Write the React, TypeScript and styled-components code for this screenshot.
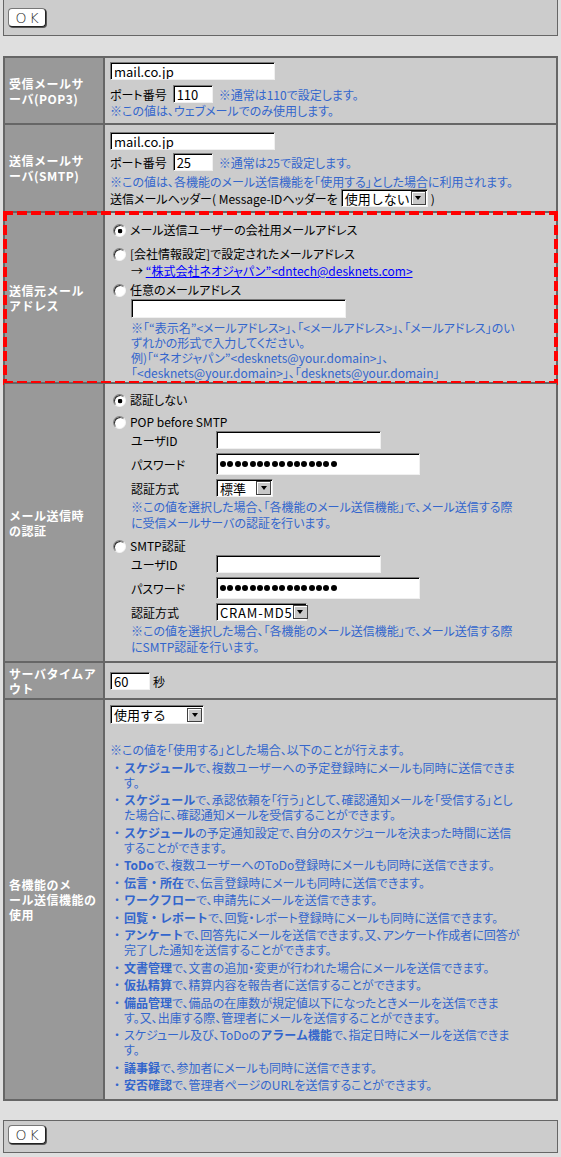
import React from 'react';
import styled, { createGlobalStyle, css } from 'styled-components';

const GlobalStyle = createGlobalStyle`
  html, body {
    margin: 0;
    padding: 0;
    background: #dfdfdf;
  }
  body {
    font-family: "Noto Sans CJK JP", "Noto Sans", sans-serif;
    font-size: 12px;
    line-height: 15px;
    color: #000;
    font-feature-settings: "palt";
  }
`;

const Page = styled.div`
  width: 555px;
  margin-left: 3px;
`;

const ButtonBar = styled.div<{ $top?: boolean }>`
  box-sizing: border-box;
  height: ${(p) => (p.$top ? 36 : 33)}px;
  margin-top: ${(p) => (p.$top ? 0 : 19)}px;
  padding: ${(p) => (p.$top ? 8 : 4)}px 3px 0;
  background: #cccccc;
  border: 1px solid #666;
  ${(p) =>
    p.$top &&
    css`
      border-top: none;
    `}
`;

const OkButton = styled.button`
  box-sizing: border-box;
  display: block;
  width: 38px;
  height: 19px;
  margin: 0 0 0 1px;
  padding: 0 0 0 3px;
  background: #fff;
  border: 1px solid #777;
  border-right-color: #222;
  border-bottom-color: #222;
  border-radius: 4px;
  box-shadow: 1px 1px 0 #555;
  font-family: "DejaVu Sans", sans-serif;
  font-size: 14px;
  font-weight: 300;
  letter-spacing: 3px;
  line-height: 16px;
  color: #2a2a2a;
  text-align: center;
`;

const FormTable = styled.div`
  margin-top: 20px;
  border: 1px solid #666;
`;

const Row = styled.div<{ $marked?: boolean }>`
  display: grid;
  grid-template-columns: 100px 1fr;
  position: relative;

  ${(p) =>
    p.$marked &&
    css`
      &::after {
        content: '';
        position: absolute;
        top: -1px;
        bottom: -2px;
        left: -1px;
        right: -1px;
        pointer-events: none;
        background:
          repeating-linear-gradient(90deg, #ff0000 0 10px, transparent 10px 14px) top / 100% 4px no-repeat,
          repeating-linear-gradient(90deg, #ff0000 0 10px, transparent 10px 14px) bottom / 100% 4px no-repeat,
          repeating-linear-gradient(180deg, #ff0000 0 10px, transparent 10px 14px) left / 4px 100% no-repeat,
          repeating-linear-gradient(180deg, #ff0000 0 10px, transparent 10px 14px) right / 4px 100% no-repeat;
      }
    `}
`;

const Label = styled.div`
  display: flex;
  align-items: center;
  padding-left: 4px;
  background: #999999;
  border: 1px solid #666;
  color: #fff;
  font-weight: bold;
  letter-spacing: 0.5px;
  font-feature-settings: normal;
  white-space: nowrap;
`;

const Cell = styled.div<{ $pad?: string }>`
  min-width: 0;
  padding: ${(p) => p.$pad ?? '5px'};
  background: #cccccc;
  border: 1px solid #666;
`;

const Line = styled.div<{ $mt?: number; $gap?: number }>`
  display: flex;
  align-items: center;
  gap: ${(p) => p.$gap ?? 6}px;
  margin-top: ${(p) => p.$mt ?? 0}px;
  white-space: nowrap;
`;

const Note = styled.div<{ $mt?: number; $lh?: number }>`
  margin-top: ${(p) => p.$mt ?? 0}px;
  line-height: ${(p) => p.$lh ?? 15}px;
  color: #3366cc;
  white-space: nowrap;
`;

const Hint = styled.span`
  color: #3366cc;
`;

const frame = css`
  box-sizing: border-box;
  margin: 0;
  background: #fff;
  border: 1px solid;
  border-color: #7a7a7a #f0f0f0 #f0f0f0 #7a7a7a;
  box-shadow: inset 1px 1px 0 #000;
`;

const Field = styled.input<{ $w: number; $h?: number }>`
  ${frame};
  width: ${(p) => p.$w}px;
  height: ${(p) => p.$h ?? 18}px;
  padding: 1px 2px 0 3px;
  font-family: "Noto Sans CJK JP", sans-serif;
  font-size: 13px;
  color: #000;
  outline: none;
  flex: none;
`;

const PasswordBox = styled.div`
  ${frame};
  display: flex;
  align-items: center;
  gap: 1.4px;
  width: 204px;
  height: 22px;
  padding-left: 3px;
`;

const Dot = styled.span`
  flex: none;
  width: 6px;
  height: 6px;
  border-radius: 50%;
  background: #000;
`;

const SelectBox = styled.div<{ $w: number; $h?: number }>`
  ${frame};
  display: flex;
  align-items: center;
  justify-content: space-between;
  width: ${(p) => p.$w}px;
  height: ${(p) => p.$h ?? 18}px;
  padding: 0 1px 0 3px;
  font-size: 13px;
  font-feature-settings: normal;
  white-space: nowrap;
  flex: none;
`;

const SelectText = styled.span<{ $spaced?: boolean }>`
  letter-spacing: ${(p) => (p.$spaced ? 0.8 : 0)}px;
`;

const DropArrow = styled.span`
  box-sizing: border-box;
  flex: none;
  display: flex;
  align-items: center;
  justify-content: center;
  width: 15px;
  height: 14px;
  background: #c8c8c8;
  border: 1px solid #404040;
  box-shadow: inset 1px 1px 0 #fff;

  &::before {
    content: '';
    border-style: solid;
    border-width: 4px 3.5px 0;
    border-color: #000 transparent transparent;
  }
`;

const RadioLine = styled.div<{ $mt?: number }>`
  display: flex;
  align-items: center;
  gap: 4px;
  height: 20px;
  margin-top: ${(p) => p.$mt ?? 0}px;
  padding-left: 3px;
  white-space: nowrap;
`;

const Radio = styled.span<{ $checked?: boolean }>`
  box-sizing: border-box;
  flex: none;
  width: 13px;
  height: 13px;
  margin-top: 2px;
  border-radius: 50%;
  border: 1px solid;
  border-color: #808080 #f4f4f4 #f4f4f4 #808080;
  box-shadow: inset 1px 1px 0 #303030;
  background: ${(p) =>
    p.$checked ? 'radial-gradient(circle at 55% 55%, #000 0 2px, #fff 2.6px)' : '#fff'};
`;

const Indent = styled.div<{ $mt?: number }>`
  margin-top: ${(p) => p.$mt ?? 0}px;
  padding-left: 21px;
  white-space: nowrap;
`;

const MailLink = styled.a`
  color: #0000ff;
  text-decoration: underline;
`;

const AuthGrid = styled.div`
  display: grid;
  grid-template-columns: 85px auto;
  row-gap: 4px;
  align-items: center;
  justify-items: start;
`;

const FeatureList = styled.ul`
  margin: 0;
  padding: 0;
  list-style: none;
  color: #3366cc;
`;

const Feature = styled.li`
  display: flex;
  margin-top: 2.5px;
  white-space: nowrap;
`;

const Bullet = styled.span`
  flex: none;
  width: 14px;
  text-align: center;
  font-feature-settings: normal;
`;

const Strong = styled.b`
  font-weight: bold;
  font-feature-settings: normal;
`;

function Select({ w, h, children, spaced }: { w: number; h?: number; children: string; spaced?: boolean }) {
  return (
    <SelectBox $w={w} $h={h}>
      <SelectText $spaced={spaced}>{children}</SelectText>
      <DropArrow />
    </SelectBox>
  );
}

function Password() {
  return (
    <PasswordBox>
      {Array.from({ length: 16 }, (_, i) => (
        <Dot key={i} />
      ))}
    </PasswordBox>
  );
}

function AuthFields({ method, methodWidth, spaced }: { method: string; methodWidth: number; spaced?: boolean }) {
  return (
    <AuthGrid>
      <span>ユーザID</span>
      <Field $w={165} readOnly value="" />
      <span>パスワード</span>
      <Password />
      <span>認証方式</span>
      <Select w={methodWidth} spaced={spaced}>
        {method}
      </Select>
    </AuthGrid>
  );
}

const features: { pre?: string; strong: string; rest: React.ReactNode }[] = [
  { strong: 'スケジュール', rest: <>で、複数ユーザーへの予定登録時にメールも同時に送信できま<br />す。</> },
  { strong: 'スケジュール', rest: <>で、承認依頼を「行う」として、確認通知メールを「受信する」とし<br />た場合に、確認通知メールを受信することができます。</> },
  { strong: 'スケジュール', rest: <>の予定通知設定で、自分のスケジュールを決まった時間に送信<br />することができます。</> },
  { strong: 'ToDo', rest: 'で、複数ユーザーへのToDo登録時にメールも同時に送信できます。' },
  { strong: '伝言・所在', rest: 'で、伝言登録時にメールも同時に送信できます。' },
  { strong: 'ワークフロー', rest: 'で、申請先にメールを送信できます。' },
  { strong: '回覧・レポート', rest: 'で、回覧・レポート登録時にメールも同時に送信できます。' },
  { strong: 'アンケート', rest: <>で、回答先にメールを送信できます。又、アンケート作成者に回答が<br />完了した通知を送信することができます。</> },
  { strong: '文書管理', rest: 'で、文書の追加・変更が行われた場合にメールを送信できます。' },
  { strong: '仮払精算', rest: 'で、精算内容を報告者に送信することができます。' },
  { strong: '備品管理', rest: <>で、備品の在庫数が規定値以下になったときメールを送信できま<br />す。又、出庫する際、管理者にメールを送信することができます。</> },
  { pre: 'スケジュール及び、ToDoの', strong: 'アラーム機能', rest: <>で、指定日時にメールを送信できま<br />す。</> },
  { strong: '議事録', rest: 'で、参加者にメールも同時に送信できます。' },
  { strong: '安否確認', rest: 'で、管理者ページのURLを送信することができます。' },
];

export default function App() {
  return (
    <>
      <GlobalStyle />
      <Page>
        <ButtonBar $top>
          <OkButton type="button">OK</OkButton>
        </ButtonBar>

        <FormTable>
          <Row>
            <Label>
              受信メールサ
              <br />
              ーバ(POP3)
            </Label>
            <Cell $pad="4px 5px 5px">
              <Line>
                <Field $w={165} readOnly value="mail.co.jp" />
              </Line>
              <Line $mt={5}>
                ポート番号
                <Field $w={40} readOnly value="110" />
                <Hint>※通常は110で設定します。</Hint>
              </Line>
              <Note>※この値は、ウェブメールでのみ使用します。</Note>
            </Cell>
          </Row>

          <Row>
            <Label>
              送信メールサ
              <br />
              ーバ(SMTP)
            </Label>
            <Cell $pad="7px 5px 4px">
              <Line>
                <Field $w={165} readOnly value="mail.co.jp" />
              </Line>
              <Line $mt={3}>
                ポート番号
                <Field $w={40} readOnly value="25" />
                <Hint>※通常は25で設定します。</Hint>
              </Line>
              <Note $mt={3}>※この値は、各機能のメール送信機能を「使用する」とした場合に利用されます。</Note>
              <Line $gap={3}>
                送信メールヘッダー( Message-IDヘッダーを
                <Select w={87}>使用しない</Select> )
              </Line>
            </Cell>
          </Row>

          <Row $marked>
            <Label>
              送信元メール
              <br />
              アドレス
            </Label>
            <Cell $pad="6px 5px 2px">
              <RadioLine>
                <Radio $checked />
                メール送信ユーザーの会社用メールアドレス
              </RadioLine>
              <RadioLine $mt={4}>
                <Radio />
                [会社情報設定]で設定されたメールアドレス
              </RadioLine>
              <Indent>
                → <MailLink href="#">{'“株式会社ネオジャパン”<dntech@desknets.com>'}</MailLink>
              </Indent>
              <RadioLine $mt={1}>
                <Radio />
                任意のメールアドレス
              </RadioLine>
              <Indent>
                <Field $w={215} $h={19} readOnly value="" />
                <Note $mt={2}>
                  {'※「“表示名”<メールアドレス>」、「<メールアドレス>」、「メールアドレス」のい'}
                  <br />
                  ずれかの形式で入力してください。
                  <br />
                  {'例)「“ネオジャパン”<desknets@your.domain>」、'}
                  <br />
                  {'「<desknets@your.domain>」、「desknets@your.domain」'}
                </Note>
              </Indent>
            </Cell>
          </Row>

          <Row>
            <Label>
              メール送信時
              <br />
              の認証
            </Label>
            <Cell $pad="5px 5px 6px">
              <RadioLine>
                <Radio $checked />
                認証しない
              </RadioLine>
              <RadioLine $mt={2}>
                <Radio />
                POP before SMTP
              </RadioLine>
              <Indent>
                <AuthFields method="標準" methodWidth={57} />
                <Note $mt={2} $lh={16}>
                  ※この値を選択した場合、「各機能のメール送信機能」で、メール送信する際
                  <br />
                  に受信メールサーバの認証を行います。
                </Note>
              </Indent>
              <RadioLine $mt={4}>
                <Radio />
                SMTP認証
              </RadioLine>
              <Indent>
                <AuthFields method="CRAM-MD5" methodWidth={91} spaced />
                <Note $mt={2} $lh={16}>
                  ※この値を選択した場合、「各機能のメール送信機能」で、メール送信する際
                  <br />
                  にSMTP認証を行います。
                </Note>
              </Indent>
            </Cell>
          </Row>

          <Row>
            <Label>
              サーバタイムア
              <br />
              ウト
            </Label>
            <Cell $pad="9px 5px 8px">
              <Line $gap={3}>
                <Field $w={40} readOnly value="60" />秒
              </Line>
            </Cell>
          </Row>

          <Row>
            <Label>
              各機能のメ
              <br />
              ール送信機能の
              <br />
              使用
            </Label>
            <Cell $pad="5px 5px 7px">
              <Line>
                <Select w={94} h={19}>
                  使用する
                </Select>
              </Line>
              <Note $mt={18}>※この値を「使用する」とした場合、以下のことが行えます。</Note>
              <FeatureList>
                {features.map((f, i) => (
                  <Feature key={i}>
                    <Bullet>・</Bullet>
                    <span>
                      {f.pre}
                      <Strong>{f.strong}</Strong>
                      {f.rest}
                    </span>
                  </Feature>
                ))}
              </FeatureList>
            </Cell>
          </Row>
        </FormTable>

        <ButtonBar>
          <OkButton type="button">OK</OkButton>
        </ButtonBar>
      </Page>
    </>
  );
}
